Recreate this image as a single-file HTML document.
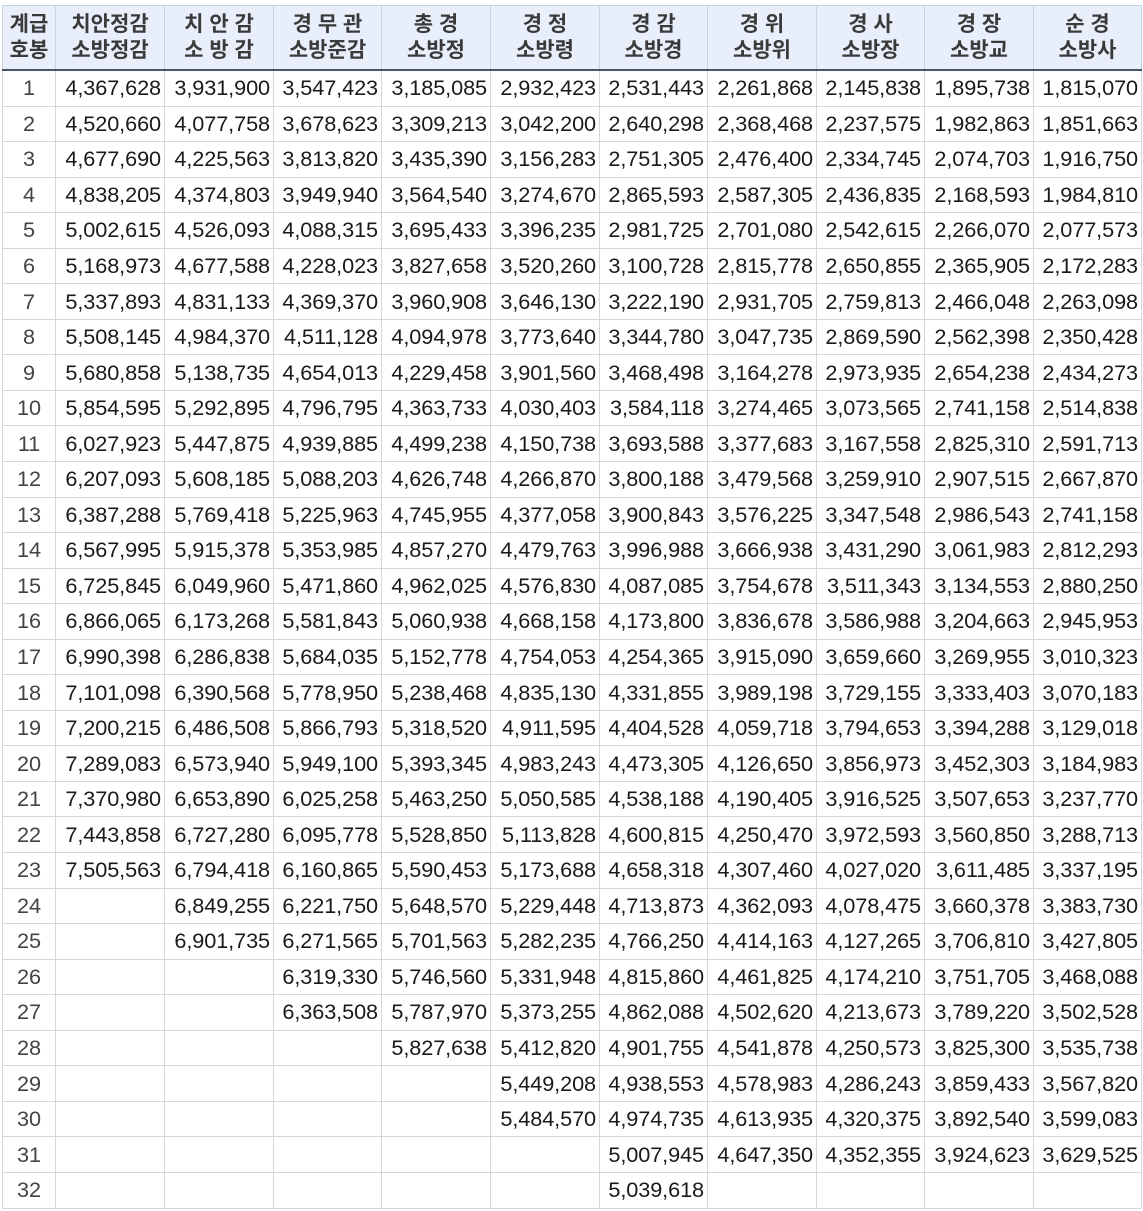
<!DOCTYPE html>
<html><head><meta charset="utf-8">
<style>
html,body{margin:0;padding:0;background:#fff;width:1143px;height:1211px;overflow:hidden}
table{position:absolute;left:2px;top:5px;border-collapse:collapse;table-layout:fixed;font-family:"Liberation Sans","Noto Sans CJK KR",sans-serif}
td,th{border:1px solid #d6d6d6;padding:0;overflow:hidden;white-space:nowrap}
th{background:#e8effa;border-color:#c9d1dd;border-bottom:2px solid #4a5566;height:63px;font-weight:bold;font-size:21px;line-height:26px;color:#3a3a3a;text-align:center}
td{height:34.55px;font-size:21.7px;color:#1a1a1a;text-align:right;padding-right:3px;letter-spacing:-0.1px}
td:first-child{text-align:center;color:#444;padding-right:0}
</style></head><body>
<table>
<colgroup><col style="width:53px"><col style="width:109px"><col style="width:109px"><col style="width:108px"><col style="width:109px"><col style="width:109px"><col style="width:108px"><col style="width:109px"><col style="width:108px"><col style="width:109px"><col style="width:108px"></colgroup>
<tr><th>계급<br>호봉</th><th>치안정감<br>소방정감</th><th>치 안 감<br>소 방 감</th><th>경 무 관<br>소방준감</th><th>총 경<br>소방정</th><th>경 정<br>소방령</th><th>경 감<br>소방경</th><th>경 위<br>소방위</th><th>경 사<br>소방장</th><th>경 장<br>소방교</th><th>순 경<br>소방사</th></tr>
<tr><td>1</td><td>4,367,628</td><td>3,931,900</td><td>3,547,423</td><td>3,185,085</td><td>2,932,423</td><td>2,531,443</td><td>2,261,868</td><td>2,145,838</td><td>1,895,738</td><td>1,815,070</td></tr>
<tr><td>2</td><td>4,520,660</td><td>4,077,758</td><td>3,678,623</td><td>3,309,213</td><td>3,042,200</td><td>2,640,298</td><td>2,368,468</td><td>2,237,575</td><td>1,982,863</td><td>1,851,663</td></tr>
<tr><td>3</td><td>4,677,690</td><td>4,225,563</td><td>3,813,820</td><td>3,435,390</td><td>3,156,283</td><td>2,751,305</td><td>2,476,400</td><td>2,334,745</td><td>2,074,703</td><td>1,916,750</td></tr>
<tr><td>4</td><td>4,838,205</td><td>4,374,803</td><td>3,949,940</td><td>3,564,540</td><td>3,274,670</td><td>2,865,593</td><td>2,587,305</td><td>2,436,835</td><td>2,168,593</td><td>1,984,810</td></tr>
<tr><td>5</td><td>5,002,615</td><td>4,526,093</td><td>4,088,315</td><td>3,695,433</td><td>3,396,235</td><td>2,981,725</td><td>2,701,080</td><td>2,542,615</td><td>2,266,070</td><td>2,077,573</td></tr>
<tr><td>6</td><td>5,168,973</td><td>4,677,588</td><td>4,228,023</td><td>3,827,658</td><td>3,520,260</td><td>3,100,728</td><td>2,815,778</td><td>2,650,855</td><td>2,365,905</td><td>2,172,283</td></tr>
<tr><td>7</td><td>5,337,893</td><td>4,831,133</td><td>4,369,370</td><td>3,960,908</td><td>3,646,130</td><td>3,222,190</td><td>2,931,705</td><td>2,759,813</td><td>2,466,048</td><td>2,263,098</td></tr>
<tr><td>8</td><td>5,508,145</td><td>4,984,370</td><td>4,511,128</td><td>4,094,978</td><td>3,773,640</td><td>3,344,780</td><td>3,047,735</td><td>2,869,590</td><td>2,562,398</td><td>2,350,428</td></tr>
<tr><td>9</td><td>5,680,858</td><td>5,138,735</td><td>4,654,013</td><td>4,229,458</td><td>3,901,560</td><td>3,468,498</td><td>3,164,278</td><td>2,973,935</td><td>2,654,238</td><td>2,434,273</td></tr>
<tr><td>10</td><td>5,854,595</td><td>5,292,895</td><td>4,796,795</td><td>4,363,733</td><td>4,030,403</td><td>3,584,118</td><td>3,274,465</td><td>3,073,565</td><td>2,741,158</td><td>2,514,838</td></tr>
<tr><td>11</td><td>6,027,923</td><td>5,447,875</td><td>4,939,885</td><td>4,499,238</td><td>4,150,738</td><td>3,693,588</td><td>3,377,683</td><td>3,167,558</td><td>2,825,310</td><td>2,591,713</td></tr>
<tr><td>12</td><td>6,207,093</td><td>5,608,185</td><td>5,088,203</td><td>4,626,748</td><td>4,266,870</td><td>3,800,188</td><td>3,479,568</td><td>3,259,910</td><td>2,907,515</td><td>2,667,870</td></tr>
<tr><td>13</td><td>6,387,288</td><td>5,769,418</td><td>5,225,963</td><td>4,745,955</td><td>4,377,058</td><td>3,900,843</td><td>3,576,225</td><td>3,347,548</td><td>2,986,543</td><td>2,741,158</td></tr>
<tr><td>14</td><td>6,567,995</td><td>5,915,378</td><td>5,353,985</td><td>4,857,270</td><td>4,479,763</td><td>3,996,988</td><td>3,666,938</td><td>3,431,290</td><td>3,061,983</td><td>2,812,293</td></tr>
<tr><td>15</td><td>6,725,845</td><td>6,049,960</td><td>5,471,860</td><td>4,962,025</td><td>4,576,830</td><td>4,087,085</td><td>3,754,678</td><td>3,511,343</td><td>3,134,553</td><td>2,880,250</td></tr>
<tr><td>16</td><td>6,866,065</td><td>6,173,268</td><td>5,581,843</td><td>5,060,938</td><td>4,668,158</td><td>4,173,800</td><td>3,836,678</td><td>3,586,988</td><td>3,204,663</td><td>2,945,953</td></tr>
<tr><td>17</td><td>6,990,398</td><td>6,286,838</td><td>5,684,035</td><td>5,152,778</td><td>4,754,053</td><td>4,254,365</td><td>3,915,090</td><td>3,659,660</td><td>3,269,955</td><td>3,010,323</td></tr>
<tr><td>18</td><td>7,101,098</td><td>6,390,568</td><td>5,778,950</td><td>5,238,468</td><td>4,835,130</td><td>4,331,855</td><td>3,989,198</td><td>3,729,155</td><td>3,333,403</td><td>3,070,183</td></tr>
<tr><td>19</td><td>7,200,215</td><td>6,486,508</td><td>5,866,793</td><td>5,318,520</td><td>4,911,595</td><td>4,404,528</td><td>4,059,718</td><td>3,794,653</td><td>3,394,288</td><td>3,129,018</td></tr>
<tr><td>20</td><td>7,289,083</td><td>6,573,940</td><td>5,949,100</td><td>5,393,345</td><td>4,983,243</td><td>4,473,305</td><td>4,126,650</td><td>3,856,973</td><td>3,452,303</td><td>3,184,983</td></tr>
<tr><td>21</td><td>7,370,980</td><td>6,653,890</td><td>6,025,258</td><td>5,463,250</td><td>5,050,585</td><td>4,538,188</td><td>4,190,405</td><td>3,916,525</td><td>3,507,653</td><td>3,237,770</td></tr>
<tr><td>22</td><td>7,443,858</td><td>6,727,280</td><td>6,095,778</td><td>5,528,850</td><td>5,113,828</td><td>4,600,815</td><td>4,250,470</td><td>3,972,593</td><td>3,560,850</td><td>3,288,713</td></tr>
<tr><td>23</td><td>7,505,563</td><td>6,794,418</td><td>6,160,865</td><td>5,590,453</td><td>5,173,688</td><td>4,658,318</td><td>4,307,460</td><td>4,027,020</td><td>3,611,485</td><td>3,337,195</td></tr>
<tr><td>24</td><td></td><td>6,849,255</td><td>6,221,750</td><td>5,648,570</td><td>5,229,448</td><td>4,713,873</td><td>4,362,093</td><td>4,078,475</td><td>3,660,378</td><td>3,383,730</td></tr>
<tr><td>25</td><td></td><td>6,901,735</td><td>6,271,565</td><td>5,701,563</td><td>5,282,235</td><td>4,766,250</td><td>4,414,163</td><td>4,127,265</td><td>3,706,810</td><td>3,427,805</td></tr>
<tr><td>26</td><td></td><td></td><td>6,319,330</td><td>5,746,560</td><td>5,331,948</td><td>4,815,860</td><td>4,461,825</td><td>4,174,210</td><td>3,751,705</td><td>3,468,088</td></tr>
<tr><td>27</td><td></td><td></td><td>6,363,508</td><td>5,787,970</td><td>5,373,255</td><td>4,862,088</td><td>4,502,620</td><td>4,213,673</td><td>3,789,220</td><td>3,502,528</td></tr>
<tr><td>28</td><td></td><td></td><td></td><td>5,827,638</td><td>5,412,820</td><td>4,901,755</td><td>4,541,878</td><td>4,250,573</td><td>3,825,300</td><td>3,535,738</td></tr>
<tr><td>29</td><td></td><td></td><td></td><td></td><td>5,449,208</td><td>4,938,553</td><td>4,578,983</td><td>4,286,243</td><td>3,859,433</td><td>3,567,820</td></tr>
<tr><td>30</td><td></td><td></td><td></td><td></td><td>5,484,570</td><td>4,974,735</td><td>4,613,935</td><td>4,320,375</td><td>3,892,540</td><td>3,599,083</td></tr>
<tr><td>31</td><td></td><td></td><td></td><td></td><td></td><td>5,007,945</td><td>4,647,350</td><td>4,352,355</td><td>3,924,623</td><td>3,629,525</td></tr>
<tr><td>32</td><td></td><td></td><td></td><td></td><td></td><td>5,039,618</td><td></td><td></td><td></td><td></td></tr>
</table>
</body></html>
